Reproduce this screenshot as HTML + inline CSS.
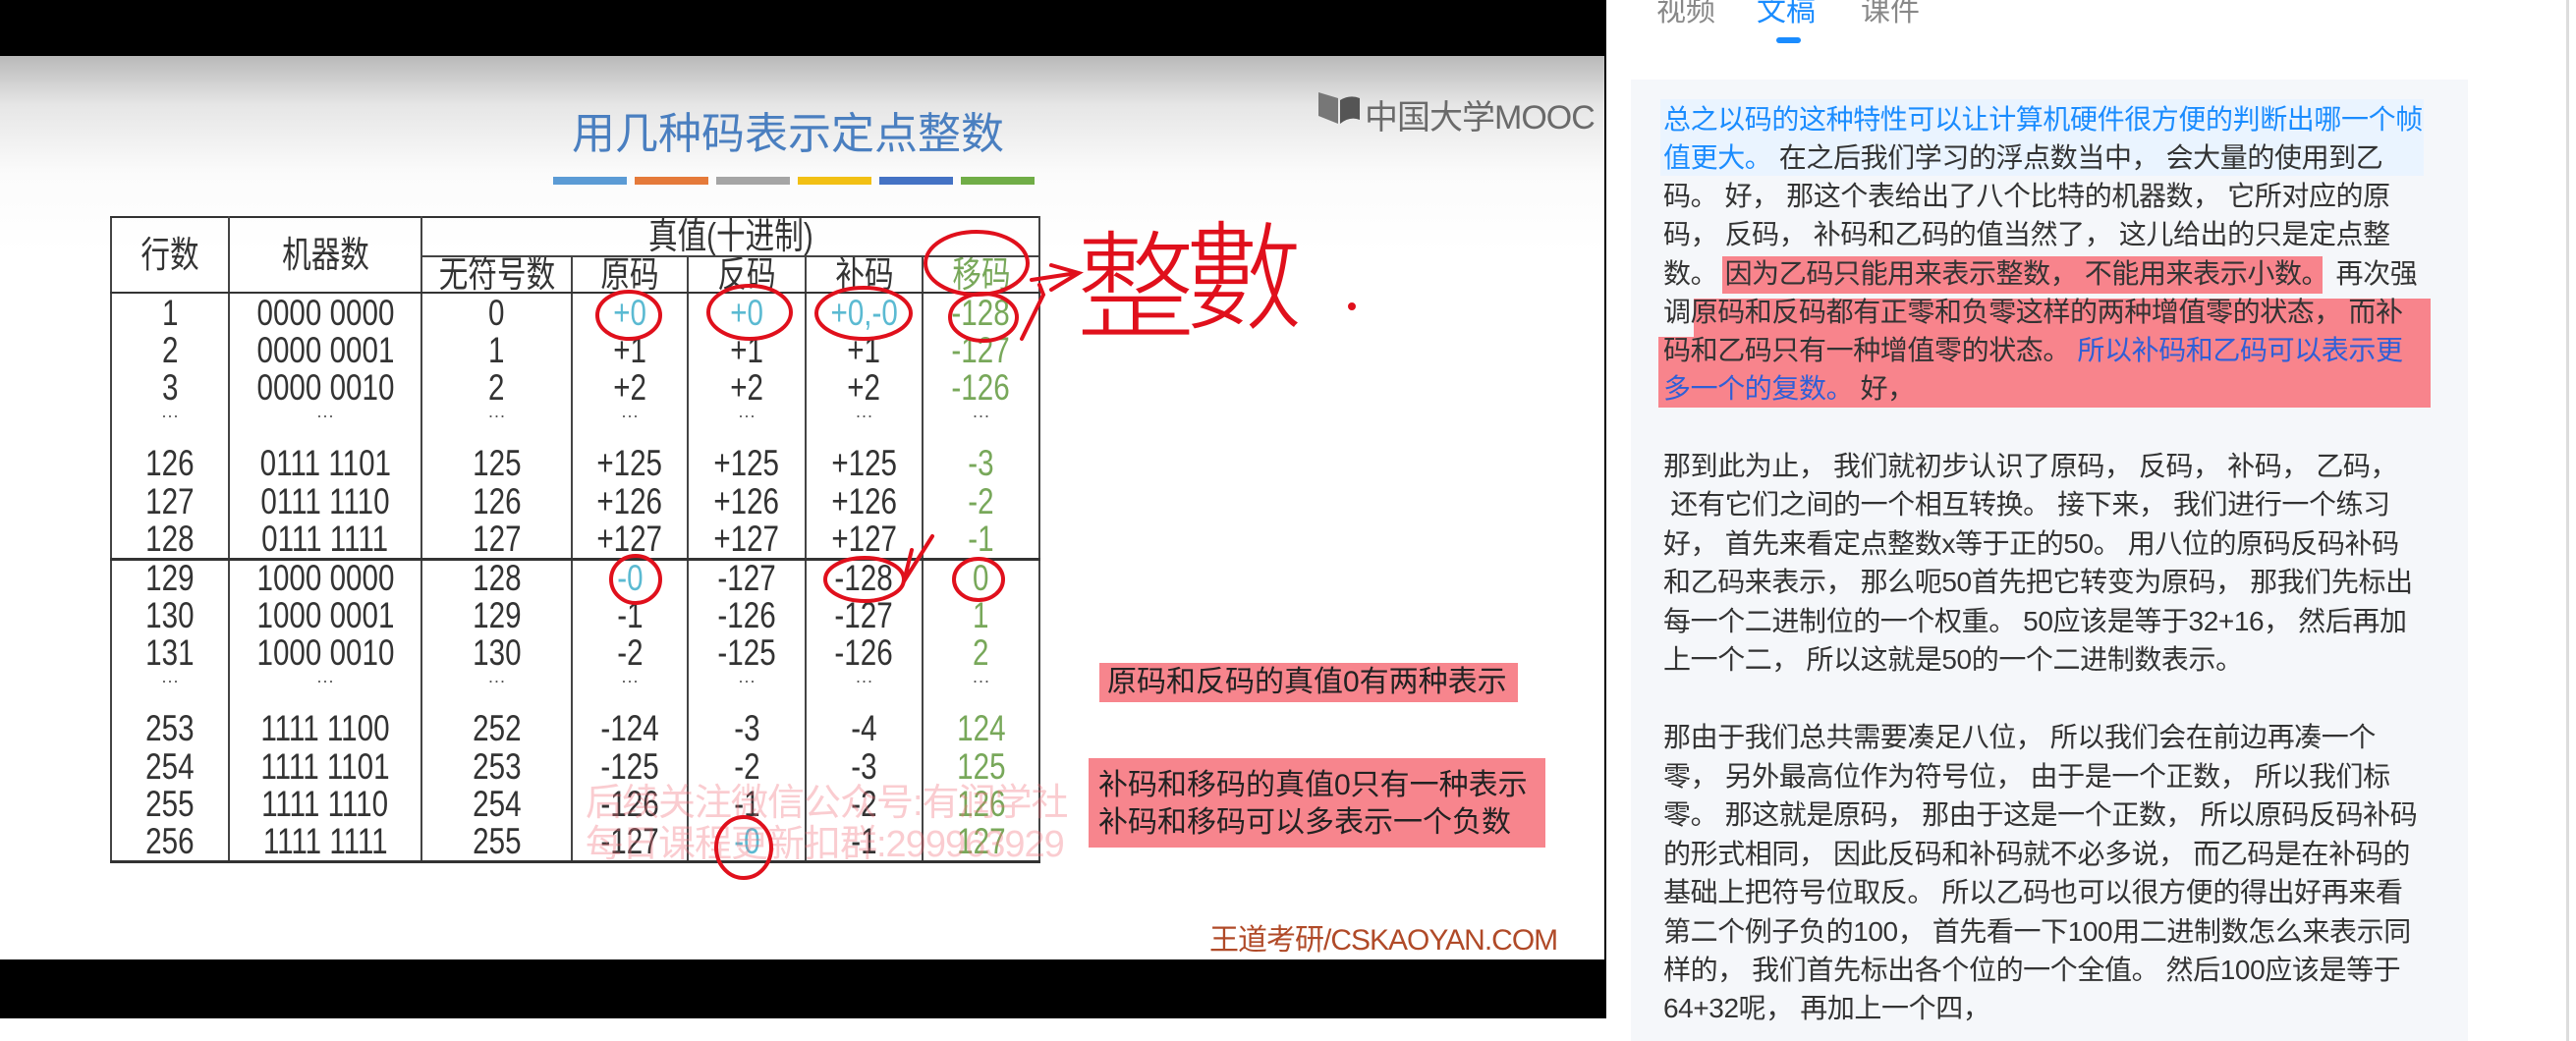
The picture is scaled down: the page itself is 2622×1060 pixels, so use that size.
<!DOCTYPE html>
<html><head><meta charset="utf-8">
<style>
*{margin:0;padding:0;box-sizing:border-box}
body{width:2622px;height:1060px;background:#fff;position:relative;overflow:hidden;font-family:"Liberation Sans","Noto Sans CJK SC",sans-serif}
.abs{position:absolute}
#vid{left:0;top:0;width:1635px;height:1037px;background:#000}
#slide{left:0;top:57px;width:1633px;height:920px;background:linear-gradient(#b9b9b9 0,#e6e6e6 50px,#fbfbfb 120px,#fff 200px)}
.title{left:552px;top:100px;width:500px;text-align:center;font-size:44px;color:#4a7fc0;white-space:nowrap}
.bar{top:180px;height:8px;width:75px}
table{border-collapse:collapse;position:absolute;left:112px;top:220px;table-layout:fixed;color:#333}
td{border-left:2px solid #444;border-right:2px solid #444;text-align:center;padding:0;font-size:37px;line-height:30px;white-space:nowrap;overflow:hidden}
td span{display:inline-block;transform:scaleX(.8)}
.hd td{border-top:2.5px solid #333}
.h2 td{border-bottom:2.5px solid #333}
.sep td{border-bottom:3px solid #333}
.last td{border-bottom:3px solid #333}
.g{color:#78a85a}
.c{color:#5bbad2}
.dots td{font-size:18px;vertical-align:top;line-height:18px;color:#555}
.pink{background:#f7858d;color:#222;font-size:30px;white-space:nowrap}
.r{left:1693px;font-size:28px;letter-spacing:-0.4px;line-height:40px;height:40px;color:#333;white-space:pre}
.b1{color:#1a8cff}
.b2{color:#2f5fd6}
</style></head><body>
<div id="vid" class="abs"></div>
<div id="slide" class="abs"></div>
<div class="abs title">用几种码表示定点整数</div>
<div class="abs bar" style="left:563px;background:#5b9bd5"></div>
<div class="abs bar" style="left:646px;background:#e57a3a"></div>
<div class="abs bar" style="left:729px;background:#a5a5a5"></div>
<div class="abs bar" style="left:812px;background:#f2c014"></div>
<div class="abs bar" style="left:895px;background:#4472c4"></div>
<div class="abs bar" style="left:978px;background:#70ad47"></div>
<svg class="abs" style="left:1340px;top:92px" width="48" height="36"><path d="M2 2 L22 8 L22 34 L2 26Z" fill="#777"/><path d="M24 10 Q34 4 44 8 L44 30 Q34 26 24 34Z" fill="#555"/></svg>
<div class="abs" style="left:1389px;top:92px;font-size:34px;color:#6a6a6a;white-space:nowrap;letter-spacing:-1px">中国大学MOOC</div>

<table>
<colgroup><col style="width:120px"><col style="width:196px"><col style="width:153px"><col style="width:118px"><col style="width:120px"><col style="width:119px"><col style="width:119px"></colgroup>
<tr class="hd" style="height:40px"><td rowspan="2" style="border-bottom:2.5px solid #333"><span>行数</span></td><td rowspan="2" style="border-bottom:2.5px solid #333"><span>机器数</span></td><td colspan="5" style="border-bottom:2px solid #444"><span>真值(十进制)</span></td></tr>
<tr class="h2" style="height:37px"><td><span>无符号数</span></td><td><span>原码</span></td><td><span>反码</span></td><td><span>补码</span></td><td class="g"><span>移码</span></td></tr>
<tr style="height:40px"><td><span>1</span></td><td><span>0000 0000</span></td><td><span>0</span></td><td class="c"><span>+0</span></td><td class="c"><span>+0</span></td><td class="c"><span>+0,-0</span></td><td class="g"><span>-128</span></td></tr>
<tr style="height:38px"><td><span>2</span></td><td><span>0000 0001</span></td><td><span>1</span></td><td><span>+1</span></td><td><span>+1</span></td><td><span>+1</span></td><td class="g"><span>-127</span></td></tr>
<tr style="height:38px"><td><span>3</span></td><td><span>0000 0010</span></td><td><span>2</span></td><td><span>+2</span></td><td><span>+2</span></td><td><span>+2</span></td><td class="g"><span>-126</span></td></tr>
<tr class="dots" style="height:38px"><td>···</td><td>···</td><td>···</td><td>···</td><td>···</td><td>···</td><td>···</td></tr>
<tr style="height:39px"><td><span>126</span></td><td><span>0111 1101</span></td><td><span>125</span></td><td><span>+125</span></td><td><span>+125</span></td><td><span>+125</span></td><td class="g"><span>-3</span></td></tr>
<tr style="height:39px"><td><span>127</span></td><td><span>0111 1110</span></td><td><span>126</span></td><td><span>+126</span></td><td><span>+126</span></td><td><span>+126</span></td><td class="g"><span>-2</span></td></tr>
<tr class="sep" style="height:39px"><td><span>128</span></td><td><span>0111 1111</span></td><td><span>127</span></td><td><span>+127</span></td><td><span>+127</span></td><td><span>+127</span></td><td class="g"><span>-1</span></td></tr>
<tr style="height:39px"><td><span>129</span></td><td><span>1000 0000</span></td><td><span>128</span></td><td class="c"><span>-0</span></td><td><span>-127</span></td><td><span>-128</span></td><td class="g"><span>0</span></td></tr>
<tr style="height:38px"><td><span>130</span></td><td><span>1000 0001</span></td><td><span>129</span></td><td><span>-1</span></td><td><span>-126</span></td><td><span>-127</span></td><td class="g"><span>1</span></td></tr>
<tr style="height:38px"><td><span>131</span></td><td><span>1000 0010</span></td><td><span>130</span></td><td><span>-2</span></td><td><span>-125</span></td><td><span>-126</span></td><td class="g"><span>2</span></td></tr>
<tr class="dots" style="height:38px"><td>···</td><td>···</td><td>···</td><td>···</td><td>···</td><td>···</td><td>···</td></tr>
<tr style="height:39px"><td><span>253</span></td><td><span>1111 1100</span></td><td><span>252</span></td><td><span>-124</span></td><td><span>-3</span></td><td><span>-4</span></td><td class="g"><span>124</span></td></tr>
<tr style="height:39px"><td><span>254</span></td><td><span>1111 1101</span></td><td><span>253</span></td><td><span>-125</span></td><td><span>-2</span></td><td><span>-3</span></td><td class="g"><span>125</span></td></tr>
<tr style="height:38px"><td><span>255</span></td><td><span>1111 1110</span></td><td><span>254</span></td><td><span>-126</span></td><td><span>-1</span></td><td><span>-2</span></td><td class="g"><span>126</span></td></tr>
<tr class="last" style="height:39px"><td><span>256</span></td><td><span>1111 1111</span></td><td><span>255</span></td><td><span>-127</span></td><td class="c"><span>-0</span></td><td><span>-1</span></td><td class="g"><span>127</span></td></tr>
</table>

<div class="abs" style="left:596px;top:786px;font-size:38px;color:rgba(240,110,120,.35);white-space:nowrap;letter-spacing:-1px">后续关注微信公众号:有润学社</div>
<div class="abs" style="left:596px;top:828px;font-size:38px;color:rgba(240,110,120,.35);white-space:nowrap;letter-spacing:-1px">每日课程更新扣群:299963929</div>

<div class="abs pink" style="left:1119px;top:675px;width:426px;height:40px;line-height:40px;padding-left:8px">原码和反码的真值0有两种表示</div>
<div class="abs pink" style="left:1108px;top:772px;width:465px;height:91px;padding:9px 0 0 10px;line-height:38px">补码和移码的真值0只有一种表示<br>补码和移码可以多表示一个负数</div>
<div class="abs" style="left:1231px;top:932px;font-size:30px;color:#b04a28;white-space:nowrap;letter-spacing:-1px">王道考研/CSKAOYAN.COM</div>

<svg class="abs" style="left:0;top:0" width="1635" height="1037" fill="none" stroke="#e0101c" stroke-width="4" stroke-linecap="round">
<ellipse cx="640" cy="321" rx="32" ry="24"/>
<ellipse cx="763" cy="318" rx="42" ry="27"/>
<ellipse cx="879" cy="319" rx="48" ry="26"/>
<ellipse cx="994" cy="268" rx="52" ry="32"/>
<ellipse cx="1001" cy="323" rx="34" ry="24"/>
<ellipse cx="647" cy="590" rx="25" ry="24"/>
<ellipse cx="880" cy="590" rx="40" ry="22"/>
<ellipse cx="996" cy="590" rx="25" ry="21"/>
<ellipse cx="757" cy="863" rx="28" ry="31"/>
<path d="M920 592 L928 560 M920 592 L949 546"/>
<path d="M1050 285 L1096 278 M1070 270 L1098 278 L1070 295"/>
<path d="M1040 345 L1062 300 L1058 290"/>
<circle cx="1376" cy="312" r="2" fill="#e0101c"/>
<text x="1096" y="335" font-size="120" fill="#e0101c" stroke="none" font-family="Noto Sans CJK SC,sans-serif" font-weight="300">整</text>
<text x="1206" y="325" font-size="120" fill="#e0101c" stroke="none" font-family="Noto Sans CJK SC,sans-serif" font-weight="300">數</text>
</svg>

<div class="abs" style="left:1686px;top:-14px;font-size:30px;color:#888;white-space:nowrap">视频</div>
<div class="abs" style="left:1788px;top:-14px;font-size:30px;color:#1a8cff;white-space:nowrap">文稿</div>
<div class="abs" style="left:1894px;top:-14px;font-size:30px;color:#888;white-space:nowrap">课件</div>
<div class="abs" style="left:1808px;top:38px;width:25px;height:6px;border-radius:3px;background:#1a8cff"></div>
<div class="abs" style="left:1660px;top:81px;width:852px;height:979px;background:#f5f7fa"></div>
<div class="abs" style="left:2612px;top:0;width:3px;height:1060px;background:#ddd"></div>
<div class="abs" style="left:1690px;top:101px;width:777px;height:78px;background:#eaf4ff"></div>
<div class="abs" style="left:1753px;top:261px;width:611px;height:38px;background:#f8848c"></div>
<div class="abs" style="left:1724px;top:304px;width:750px;height:40px;background:#f8848c"></div>
<div class="abs" style="left:1688px;top:343px;width:786px;height:72px;background:#f8848c"></div>

<div class="abs r b1" style="top:102px">总之以码的这种特性可以让计算机硬件很方便的判断出哪一个帧</div>
<div class="abs r" style="top:141px"><span class="b1">值更大。</span> 在之后我们学习的浮点数当中， 会大量的使用到乙</div>
<div class="abs r" style="top:180px">码。 好， 那这个表给出了八个比特的机器数， 它所对应的原</div>
<div class="abs r" style="top:219px">码， 反码， 补码和乙码的值当然了， 这儿给出的只是定点整</div>
<div class="abs r" style="top:259px">数。 因为乙码只能用来表示整数， 不能用来表示小数。 再次强</div>
<div class="abs r" style="top:298px">调原码和反码都有正零和负零这样的两种增值零的状态， 而补</div>
<div class="abs r" style="top:337px">码和乙码只有一种增值零的状态。 <span class="b2">所以补码和乙码可以表示更</span></div>
<div class="abs r" style="top:376px"><span class="b2">多一个的复数。</span> 好，</div>

<div class="abs r" style="top:455px">那到此为止， 我们就初步认识了原码， 反码， 补码， 乙码，</div>
<div class="abs r" style="top:494px"> 还有它们之间的一个相互转换。 接下来， 我们进行一个练习</div>
<div class="abs r" style="top:534px">好， 首先来看定点整数x等于正的50。 用八位的原码反码补码</div>
<div class="abs r" style="top:573px">和乙码来表示， 那么呃50首先把它转变为原码， 那我们先标出</div>
<div class="abs r" style="top:613px">每一个二进制位的一个权重。 50应该是等于32+16， 然后再加</div>
<div class="abs r" style="top:652px">上一个二， 所以这就是50的一个二进制数表示。</div>

<div class="abs r" style="top:731px">那由于我们总共需要凑足八位， 所以我们会在前边再凑一个</div>
<div class="abs r" style="top:771px">零， 另外最高位作为符号位， 由于是一个正数， 所以我们标</div>
<div class="abs r" style="top:810px">零。 那这就是原码， 那由于这是一个正数， 所以原码反码补码</div>
<div class="abs r" style="top:850px">的形式相同， 因此反码和补码就不必多说， 而乙码是在补码的</div>
<div class="abs r" style="top:889px">基础上把符号位取反。 所以乙码也可以很方便的得出好再来看</div>
<div class="abs r" style="top:929px">第二个例子负的100， 首先看一下100用二进制数怎么来表示同</div>
<div class="abs r" style="top:968px">样的， 我们首先标出各个位的一个全值。 然后100应该是等于</div>
<div class="abs r" style="top:1007px">64+32呢， 再加上一个四，</div>
</body></html>
